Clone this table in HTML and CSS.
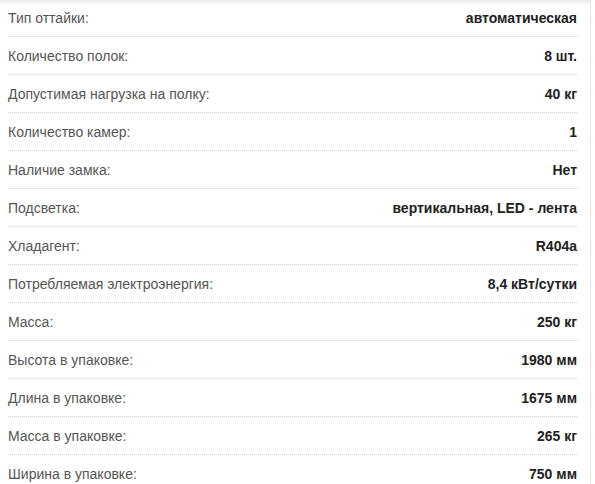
FILE: index.html
```html
<!DOCTYPE html>
<html lang="ru">
<head>
<meta charset="utf-8">
<link rel="stylesheet" href="styles.css">
</head>
<body>
<div class="page">
  <div class="specs">
    <div class="row"><span class="label">Тип оттайки:</span><span class="value">автоматическая</span></div>
    <div class="row"><span class="label">Количество полок:</span><span class="value">8 шт.</span></div>
    <div class="row"><span class="label">Допустимая нагрузка на полку:</span><span class="value">40 кг</span></div>
    <div class="row"><span class="label">Количество камер:</span><span class="value">1</span></div>
    <div class="row"><span class="label">Наличие замка:</span><span class="value">Нет</span></div>
    <div class="row"><span class="label">Подсветка:</span><span class="value">вертикальная, LED - лента</span></div>
    <div class="row"><span class="label">Хладагент:</span><span class="value">R404a</span></div>
    <div class="row"><span class="label">Потребляемая электроэнергия:</span><span class="value">8,4 кВт/сутки</span></div>
    <div class="row"><span class="label">Масса:</span><span class="value">250 кг</span></div>
    <div class="row"><span class="label">Высота в упаковке:</span><span class="value">1980 мм</span></div>
    <div class="row"><span class="label">Длина в упаковке:</span><span class="value">1675 мм</span></div>
    <div class="row"><span class="label">Масса в упаковке:</span><span class="value">265 кг</span></div>
    <div class="row"><span class="label">Ширина в упаковке:</span><span class="value">750 мм</span></div>
  </div>
</div>
</body>
</html>
```
FILE: styles.css
```css
html, body {
  margin: 0;
  padding: 0;
  background: #fff;
}
body {
  font-family: "Liberation Sans", Arial, sans-serif;
  font-size: 14px;
}
.page {
  width: 590px;
  height: 484px;
  overflow: hidden;
  border-right: 1px solid #e4e4e4;
  background: linear-gradient(to bottom, #ebebeb 0, #fff 6px);
}
.specs {
  margin: -1px 0 0 0;
  padding: 0 13px 0 8px;
}
.row {
  display: flex;
  justify-content: space-between;
  align-items: center;
  height: 37px;
  border-bottom: 1px dotted #d6d6d6;
}
.label {
  color: #555;
}
.value {
  color: #222;
  font-weight: bold;
}
```
